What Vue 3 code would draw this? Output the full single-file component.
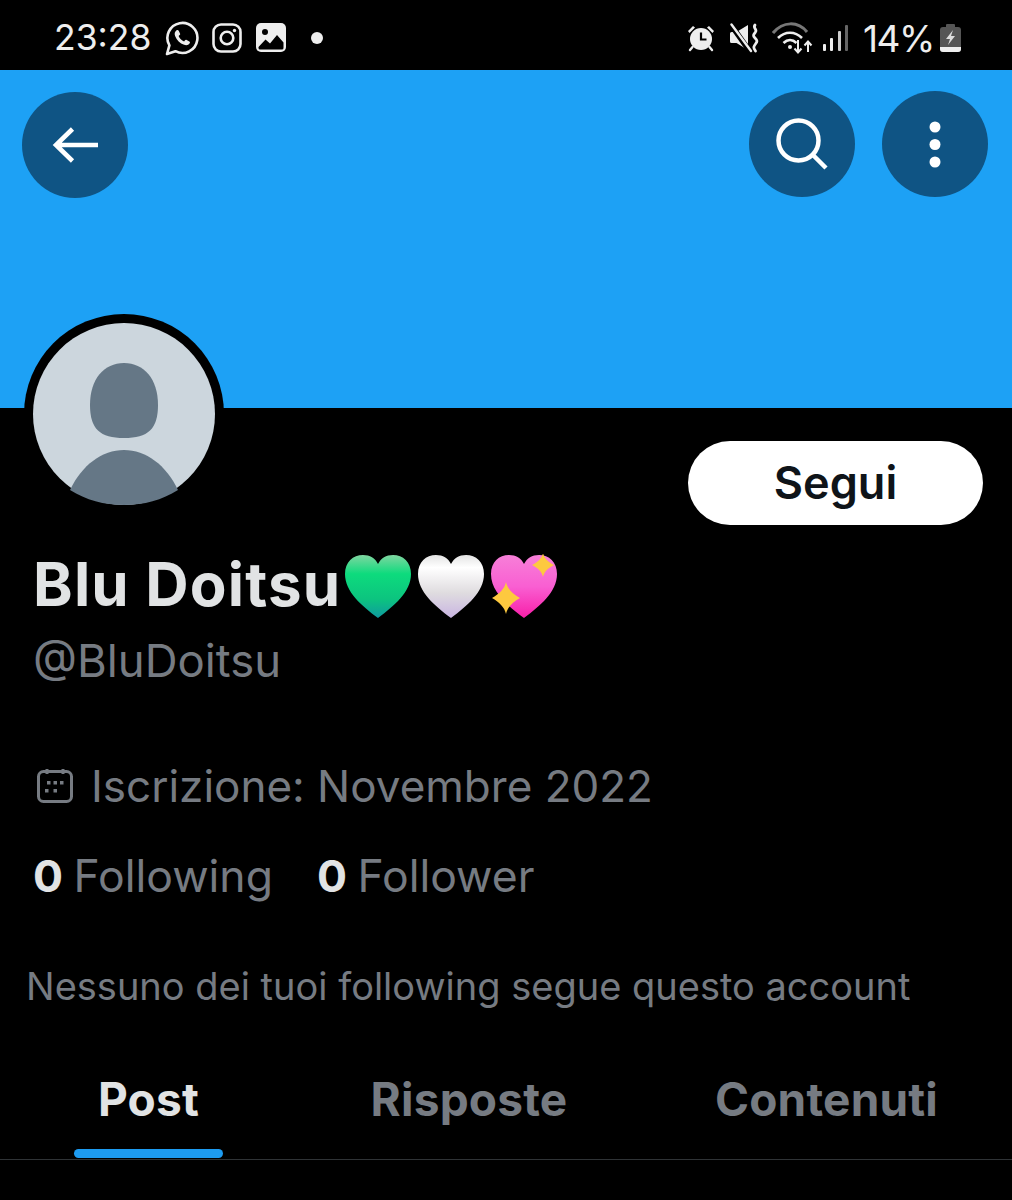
<template>
  <div class="page">
    <div class="status-bar">
      <div class="status-left">
        <span class="time">23:28</span>
        <svg class="ic-wa" width="34" height="35" viewBox="0 0 34 35" fill="none">
          <path d="M2 33l2.400-8.600A15 15 0 1 1 10.400 30.200z" stroke="#eee" stroke-width="2.600" stroke-linejoin="round" />
          <path d="M11.500 9.500c-1.800 1.200-2.300 3.200-1.400 5.400 1.700 4.200 4.800 7.300 9 8.900 2.300.9 4.500.3 5.600-1.500.5-.8.300-1.400-.4-1.800l-2.600-1.500c-.7-.4-1.200-.3-1.700.3l-.9 1.100c-2.500-1-4.500-3-5.500-5.400l1-.9c.6-.5.7-1 .4-1.700l-1.300-2.700c-.4-.8-1.200-.9-2.200-.6z" fill="#eee" />
        </svg>
        <svg class="ic-ig" width="30" height="30" viewBox="0 0 30 30" fill="none">
          <rect x="1.500" y="1.500" width="27" height="27" rx="7.500" stroke="#eee" stroke-width="2.600" />
          <circle cx="15" cy="15" r="6.300" stroke="#eee" stroke-width="2.600" />
          <circle cx="22.500" cy="7.500" r="1.700" fill="#eee" />
        </svg>
        <svg class="ic-img" width="30" height="30" viewBox="0 0 30 30">
          <rect width="30" height="29" rx="5" fill="#eee" />
          <circle cx="9" cy="9" r="3" fill="#000" />
          <path d="M2.500 24l7-7.500 4.500 4 7-8.500 6.500 7.500v5.500a1.500 1.500 0 0 1-1.500 1.500H4a1.500 1.500 0 0 1-1.500-1.500z" fill="#000" />
        </svg>
        <span class="notif-dot"></span>
      </div>
      <div class="status-right">
        <svg class="ic-alarm" width="28" height="28" viewBox="0 0 28 28">
          <circle cx="14" cy="15" r="11" fill="#eee" />
          <path d="M14 8.500v7h5.500" fill="none" stroke="#000" stroke-width="2.200" />
          <path d="M1 7l5-5 2 1.500L2.500 9zM27 7l-5-5-2 1.500L25.500 9z" fill="#eee" />
          <path d="M5.500 23l-2.500 3M22.500 23l2.500 3" stroke="#eee" stroke-width="2.400" stroke-linecap="round" />
        </svg>
        <svg class="ic-mute" width="30" height="30" viewBox="0 0 30 30" fill="none">
          <path d="M0 10.500a1.500 1.500 0 0 1 1.500-1.500h5L18 2v25L6.500 20h-5A1.500 1.500 0 0 1 0 18.500z" fill="#eee" />
          <path d="M-1 -1L21 30" stroke="#000" stroke-width="5.500" />
          <path d="M1.500 1.500L21 28" stroke="#eee" stroke-width="2.400" stroke-linecap="round" />
          <path d="M25 2c-2.500 3 2.500 4.500.5 7s-3 3.500-.5 6 2.500 3.500.5 6-2.500 3.500 0 7" stroke="#eee" stroke-width="2.800" stroke-linecap="round" />
        </svg>
        <svg class="ic-wifi" width="44" height="34" viewBox="0 0 44 34" fill="none">
          <path d="M1 12C11 0 26 0 35 11" stroke="#777" stroke-width="3" />
          <path d="M6 17c7-7 17-7 24 0M11.500 22c4-4 9-4 13 0" stroke="#eee" stroke-width="2.600" />
          <circle cx="18" cy="26" r="2" fill="#eee" />
          <path d="M26 19v12M22.500 27.500l3.500 4 3.500-4M36 31V21M32.500 24.500L36 20.500l3.500 4" stroke="#eee" stroke-width="2" />
        </svg>
        <svg class="ic-signal" width="26" height="28" viewBox="0 0 26 28">
          <rect x="0" y="20" width="3" height="7" rx="1" fill="#eee" />
          <rect x="7" y="14" width="3" height="13" rx="1" fill="#eee" />
          <rect x="15" y="7" width="3" height="20" rx="1" fill="#ccc" />
          <rect x="22" y="1" width="3" height="26" rx="1" fill="#666" />
        </svg>
        <span class="battery-text">14%</span>
        <svg class="ic-batt" width="21" height="29" viewBox="0 0 21 29">
          <rect x="6" y="0" width="9" height="4" rx="1" fill="#555" />
          <rect x="0" y="3" width="21" height="25" rx="3" fill="#555" />
          <path d="M0 23h21v2a3 3 0 0 1-3 3H3a3 3 0 0 1-3-3z" fill="#eee" />
          <path d="M13 6l-7 9h4l-2 6 7-9h-4z" fill="#ddd" />
        </svg>
      </div>
    </div>

    <div class="banner">
      <div class="round-btn">
        <svg width="48" height="40" viewBox="0 0 48 40" fill="none">
          <path d="M47 20H5M21.500 4L5 20l16.500 16" stroke="#fff" stroke-width="4.600" />
        </svg>
      </div>
      <div class="banner-right">
        <div class="round-btn">
          <svg width="56" height="56" viewBox="0 0 56 56" fill="none">
            <circle cx="24.500" cy="24.500" r="20" stroke="#fff" stroke-width="4.500" />
            <path d="M38.500 38.500L52 52" stroke="#fff" stroke-width="4.500" />
          </svg>
        </div>
        <div class="round-btn">
          <svg width="16" height="50" viewBox="0 0 16 50">
            <circle cx="8" cy="8" r="5.500" fill="#fff" />
            <circle cx="8" cy="25.500" r="5.500" fill="#fff" />
            <circle cx="8" cy="43" r="5.500" fill="#fff" />
          </svg>
        </div>
      </div>
    </div>

    <div class="profile">
      <div class="top-row">
        <div class="avatar">
          <svg width="182" height="182" viewBox="0 0 182 182">
            <circle cx="91" cy="91" r="91" fill="#ccd6dd" />
            <path d="M91 40c20 0 34 16 34 42 0 24-10 33-34 33s-34-9-34-33c0-26 14-42 34-42z" fill="#657786" />
            <path d="M37 167c12-25 32-40 54-40s42 15 54 40c-16 10-34 15-54 15s-38-5-54-15z" fill="#657786" />
          </svg>
        </div>
        <button class="follow-btn">Segui</button>
      </div>

      <div class="name-row">
        <span class="name">Blu Doitsu</span>
        <svg class="heart" width="68" height="65" viewBox="0 0 68 65">
          <defs>
            <linearGradient id="hg" x1="0" y1="0" x2="0" y2="1">
              <stop offset="0" stop-color="#7fd6a0" />
              <stop offset="0.3" stop-color="#0ddb7d" />
              <stop offset="0.7" stop-color="#0cc47f" />
              <stop offset="1" stop-color="#0f9aa0" />
            </linearGradient>
          </defs>
          <path d="M34 64C18 52 1 38 1 20 1 8 9 1 19 1c7 0 12 3 15 9 3-6 8-9 15-9 10 0 18 7 18 19 0 18-17 32-33 44z" fill="url(#hg)" />
        </svg>
        <svg class="heart" width="68" height="65" viewBox="0 0 68 65">
          <defs>
            <linearGradient id="hw" x1="0" y1="0" x2="0" y2="1">
              <stop offset="0" stop-color="#e4e4e4" />
              <stop offset="0.2" stop-color="#fff" />
              <stop offset="0.6" stop-color="#dfdcdf" />
              <stop offset="1" stop-color="#c9b5e2" />
            </linearGradient>
          </defs>
          <path d="M34 64C18 52 1 38 1 20 1 8 9 1 19 1c7 0 12 3 15 9 3-6 8-9 15-9 10 0 18 7 18 19 0 18-17 32-33 44z" fill="url(#hw)" />
        </svg>
        <svg class="heart" width="68" height="65" viewBox="0 0 68 65">
          <defs>
            <linearGradient id="hp" x1="0" y1="0" x2="0" y2="1">
              <stop offset="0" stop-color="#f77fd8" />
              <stop offset="0.5" stop-color="#f95fd2" />
              <stop offset="1" stop-color="#f81fa8" />
            </linearGradient>
          </defs>
          <path d="M34 64C18 52 1 38 1 20 1 8 9 1 19 1c7 0 12 3 15 9 3-6 8-9 15-9 10 0 18 7 18 19 0 18-17 32-33 44z" fill="url(#hp)" />
          <path d="M53 -1c1 5 5 9 11 12-6 3-10 7-11 12-1-5-5-9-11-12 6-3 10-7 11-12z" fill="#fdc93f" />
          <path d="M16 28c1.500 7 7 12 14 16-7 4-12.500 9-14 16-1.500-7-7-12-14-16 7-4 12.500-9 14-16z" fill="#fdc93f" />
        </svg>
      </div>
      <div class="handle">@BluDoitsu</div>

      <div class="joined">
        <svg width="36" height="36" viewBox="0 0 36 36" fill="none">
          <rect x="1.500" y="3.500" width="33" height="30" rx="5" stroke="#767b82" stroke-width="3" />
          <path d="M10 1v5M26 1v5" stroke="#767b82" stroke-width="3" />
          <g fill="#767b82">
            <rect x="10" y="13" width="3.500" height="3.500" />
            <rect x="16.500" y="13" width="3.500" height="3.500" />
            <rect x="23" y="13" width="3.500" height="3.500" />
            <rect x="8" y="21" width="3.500" height="3.500" />
            <rect x="16.500" y="21" width="3.500" height="3.500" />
          </g>
        </svg>
        <span>Iscrizione: Novembre 2022</span>
      </div>

      <div class="counts">
        <span><b>0</b> Following</span>
        <span><b>0</b> Follower</span>
      </div>

      <div class="mutuals">Nessuno dei tuoi following segue questo account</div>
    </div>

    <div class="tabs">
      <div class="tab tab-post active">Post</div>
      <div class="tab tab-replies">Risposte</div>
      <div class="tab tab-media">Contenuti</div>
    </div>
  </div>
</template>

<script setup>
</script>

<style>
html,
body {
  background: #000;
}
</style>

<style scoped>
* {
  box-sizing: border-box;
}

.page {
  width: 1012px;
  height: 1200px;
  background: #000;
  font-family: Inter, "Liberation Sans", sans-serif;
  color: #e1e3e4;
  overflow: hidden;
}

.status-bar {
  height: 70px;
  display: flex;
  justify-content: space-between;
  align-items: center;
  padding: 6px 51px 0 54px;
  color: #eee;
}

.status-left,
.status-right {
  display: flex;
  align-items: center;
}

.time {
  width: 97px;
  font-size: 35.500px;
  line-height: 1;
}

.ic-wa {
  margin-left: 14px;
}

.ic-ig {
  margin-left: 13px;
}

.ic-img {
  margin-left: 14px;
}

.notif-dot {
  width: 12px;
  height: 12px;
  margin-left: 25px;
  border-radius: 50%;
  background: #eee;
}

.ic-mute {
  margin-left: 15px;
}

.ic-wifi {
  margin-left: 12px;
}

.ic-signal {
  margin-left: 7px;
}

.battery-text {
  width: 72px;
  margin-left: 14px;
  font-size: 37px;
  line-height: 1;
  letter-spacing: -1.500px;
}

.ic-batt {
  margin-left: 5px;
}

.banner {
  height: 338px;
  background: #1da1f5;
  display: flex;
  justify-content: space-between;
  align-items: flex-start;
  padding: 22px 24px 0 22px;
}

.banner-right {
  display: flex;
  gap: 27px;
  margin-top: -1px;
}

.round-btn {
  width: 106px;
  height: 106px;
  border-radius: 50%;
  background: #0f5484;
  display: flex;
  align-items: center;
  justify-content: center;
}

.profile {
  padding: 0 29px 0 33px;
}

.top-row {
  height: 117px;
  display: flex;
  justify-content: space-between;
  align-items: flex-start;
}

.avatar {
  width: 200px;
  height: 200px;
  margin: -94px 0 0 -9px;
  border-radius: 50%;
  background: #000;
  display: flex;
  align-items: center;
  justify-content: center;
  flex-shrink: 0;
}

.follow-btn {
  width: 295px;
  height: 84px;
  margin-top: 33px;
  padding-bottom: 2px;
  border: none;
  border-radius: 42px;
  background: #fff;
  color: #0f1419;
  font-family: inherit;
  font-size: 45px;
  font-weight: 600;
}

.name-row {
  height: 66px;
  margin-top: 28px;
  display: flex;
  align-items: center;
  gap: 1px;
}

.name {
  width: 310px;
  padding-bottom: 4px;
  font-size: 60px;
  font-weight: 700;
  line-height: 1;
  letter-spacing: 1.200px;
  white-space: nowrap;
}

.heart {
  margin-right: 4px;
}

.handle {
  margin-top: 15px;
  font-size: 45.500px;
  line-height: 54px;
  color: #767b82;
}

.joined {
  margin-top: 71px;
  display: flex;
  align-items: center;
  gap: 18px;
  padding-left: 4px;
  font-size: 44px;
  line-height: 54px;
  color: #767b82;
}

.counts {
  margin-top: 36px;
  display: flex;
  gap: 44px;
  font-size: 44.500px;
  line-height: 54px;
  word-spacing: -2px;
  color: #767b82;
}

.counts b {
  color: #e1e3e4;
  font-weight: 700;
}

.mutuals {
  margin: 60px 0 0 -7px;
  font-size: 38px;
  line-height: 46px;
  color: #767b82;
  white-space: nowrap;
}

.tabs {
  height: 128px;
  margin-top: 23px;
  display: flex;
  border-bottom: 1px solid #2f3336;
}

.tab {
  position: relative;
  padding-top: 40px;
  font-size: 46px;
  line-height: 54px;
  font-weight: 700;
  letter-spacing: 0.200px;
  color: #767b82;
  text-align: center;
}

.tab-post {
  width: 297px;
  color: #e1e3e4;
}

.tab-replies {
  width: 344px;
}

.tab-media {
  width: 371px;
}

.tab.active::after {
  content: "";
  position: absolute;
  left: 74px;
  bottom: 1px;
  width: 149px;
  height: 9px;
  border-radius: 5px;
  background: #1d9bf0;
}
</style>
